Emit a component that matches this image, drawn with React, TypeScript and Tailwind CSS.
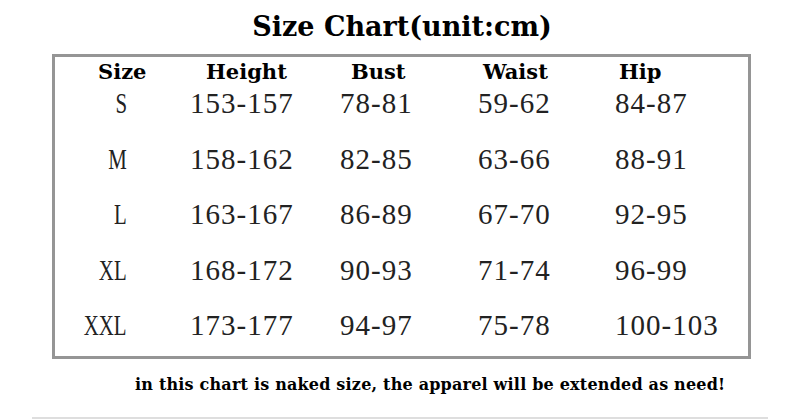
import React from "react";

const rows = [
  ["S", "153-157", "78-81", "59-62", "84-87"],
  ["M", "158-162", "82-85", "63-66", "88-91"],
  ["L", "163-167", "86-89", "67-70", "92-95"],
  ["XL", "168-172", "90-93", "71-74", "96-99"],
  ["XXL", "173-177", "94-97", "75-78", "100-103"],
];

const App = () => {
  return (
    <div className="w-[800px] h-[419px] bg-white overflow-hidden text-black flex flex-col">
      <h1 className="pt-[12px] text-center text-[27px] leading-[30px] font-bold [font-family:'DejaVu_Serif',serif] pl-[4px]">
        Size Chart(unit:cm)
      </h1>

      <div className="mt-[12px] ml-[52px] w-[699px] h-[305px] border-[3px] border-[#959595]">
        <div className="flex h-[30px] leading-[30px] text-[21px] font-bold [font-family:'DejaVu_Serif',serif]">
          <div className="w-[135px] pl-[43px]">Size</div>
          <div className="w-[150px] pl-[16px]">Height</div>
          <div className="w-[138px] pl-[11px]">Bust</div>
          <div className="w-[137px] pl-[5px]">Waist</div>
          <div className="flex-1 pl-[4px]">Hip</div>
        </div>

        <div className="flex flex-col gap-[23.5px] text-[29px] leading-[32px] [font-family:'Liberation_Serif','Times_New_Roman',serif] text-[#222]">
          {rows.map((r) => (
            <div key={r[0]} className="flex h-[32px]">
              <div className="w-[135px]">
                <div className="w-[72px] text-right">
                  <span className="inline-block origin-right scale-x-[0.72]">{r[0]}</span>
                </div>
              </div>
              <div className="w-[150px] tracking-[1px]">{r[1]}</div>
              <div className="w-[138px] tracking-[1px]">{r[2]}</div>
              <div className="w-[137px] tracking-[1px]">{r[3]}</div>
              <div className="flex-1 tracking-[1px]">{r[4]}</div>
            </div>
          ))}
        </div>
      </div>

      <p className="mt-[16px] ml-[135px] text-[16px] leading-[20px] tracking-[0.2px] font-bold [font-family:'DejaVu_Serif',serif] whitespace-nowrap">
        in this chart is naked size, the apparel will be extended as need!
      </p>

      <div className="mt-[22px] mx-[32px] h-[2px] bg-[#dedede]" />
    </div>
  );
};

export default App;
